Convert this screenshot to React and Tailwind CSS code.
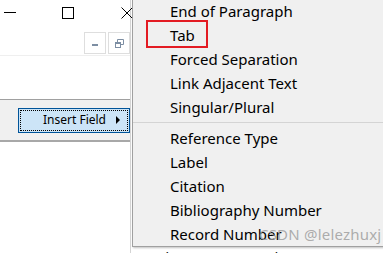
export default function App() {
  const top = ['End of Paragraph', 'Tab', 'Forced Separation', 'Link Adjacent Text', 'Singular/Plural']
  const bottom = ['Reference Type', 'Label', 'Citation', 'Bibliography Number', 'Record Number']

  return (
    <div className="relative w-[383px] h-[253px] overflow-hidden bg-white flex" style={{ fontFamily: '"Noto Sans", "Liberation Sans", sans-serif' }}>
      {/* left window */}
      <div className="w-[131px] h-full flex flex-col bg-white border-r border-[#d4d4d4]">
        <div className="h-[26px] relative">
          <div className="absolute left-[4px] top-[12px] w-[12px] h-px bg-black" />
          <div className="absolute left-[62px] top-[7px] w-[12px] h-[12px] border border-black" />
          <svg className="absolute left-[121px] top-[7px]" width="12" height="12" viewBox="0 0 12 12">
            <path d="M0.5 0.5 L11.5 11.5 M11.5 0.5 L0.5 11.5" stroke="black" strokeWidth="1" />
          </svg>
        </div>
        <div className="h-[30px] flex justify-end items-end gap-[2px] border-b border-[#efefef] pb-px">
          <div className="w-[22px] h-[22px] border border-[#dedede] flex items-center justify-center pt-[4px]">
            <div className="w-[6px] h-[2px] bg-[#7d8ea3]" />
          </div>
          <div className="w-[22px] h-[22px] border border-[#dedede] flex items-center justify-center">
            <svg width="9" height="9" viewBox="0 0 9 9">
              <rect x="0.5" y="3.5" width="5" height="5" fill="none" stroke="#7d8ea3" />
              <path d="M2.5 3.5 V0.5 H8.5 V5.5 H5.5" fill="none" stroke="#7d8ea3" />
              <path d="M0.5 4.5 H5.5" stroke="#7d8ea3" />
            </svg>
          </div>
        </div>
        <div className="h-[43px]" />
        <div className="h-[43px] bg-[#f0f0f0] border-t border-[#a0a0a0] border-b-2 border-b-[#a8a8a8] flex items-center justify-end">
          <div className="w-[112px] h-[25px] bg-[#cce4f7] border border-[#005499] p-[1px]">
            <div className="h-full border border-dotted border-black flex items-center pl-[22px] pr-[7px] text-[12px] text-black" style={{ fontFamily: '"Noto Sans", sans-serif' }}>
              <span className="flex-1 leading-none">Insert Field</span>
              <span className="w-0 h-0 border-y-[4px] border-y-transparent border-l-[4px] border-l-black" />
            </div>
          </div>
        </div>
        <div className="flex-1" />
      </div>

      {/* document behind the menu */}
      <div className="flex-1 flex flex-col justify-end">
        <div className="h-[7px] overflow-hidden pl-[24px] text-[15px] leading-[23px] text-[#222]">Id DY.StaHuwSucks.PE</div>
      </div>

      {/* popup menu */}
      <div className="absolute left-[132px] top-[-2px] w-[260px] h-[249px] bg-[#f0f0f0] border border-[#a0a0a0] shadow-[1px_1px_2px_rgba(0,0,0,0.25)] text-[15px] text-black">
        <div className="flex flex-col">
          {top.map((t) => (
            <div key={t} className="h-[24px] flex items-center pl-[37px] leading-none">
              {t === 'Tab' ? (
                <span className="relative">
                  {t}
                  <span className="absolute -left-[24px] -top-[8px] w-[62px] h-[28px] border-2 border-[#e31b23]" />
                </span>
              ) : (
                t
              )}
            </div>
          ))}
          <div className="h-[7px] flex items-center">
            <div className="w-full h-px bg-[#d4d4d4]" />
          </div>
          {bottom.map((t) => (
            <div key={t} className="h-[24px] flex items-center pl-[37px] leading-none">{t}</div>
          ))}
        </div>
        <div className="absolute left-[126px] top-[224px] text-[15px] text-[#9a9a9a]/80 tracking-[0.2px]">CSDN @lelezhuxj</div>
      </div>
    </div>
  )
}
